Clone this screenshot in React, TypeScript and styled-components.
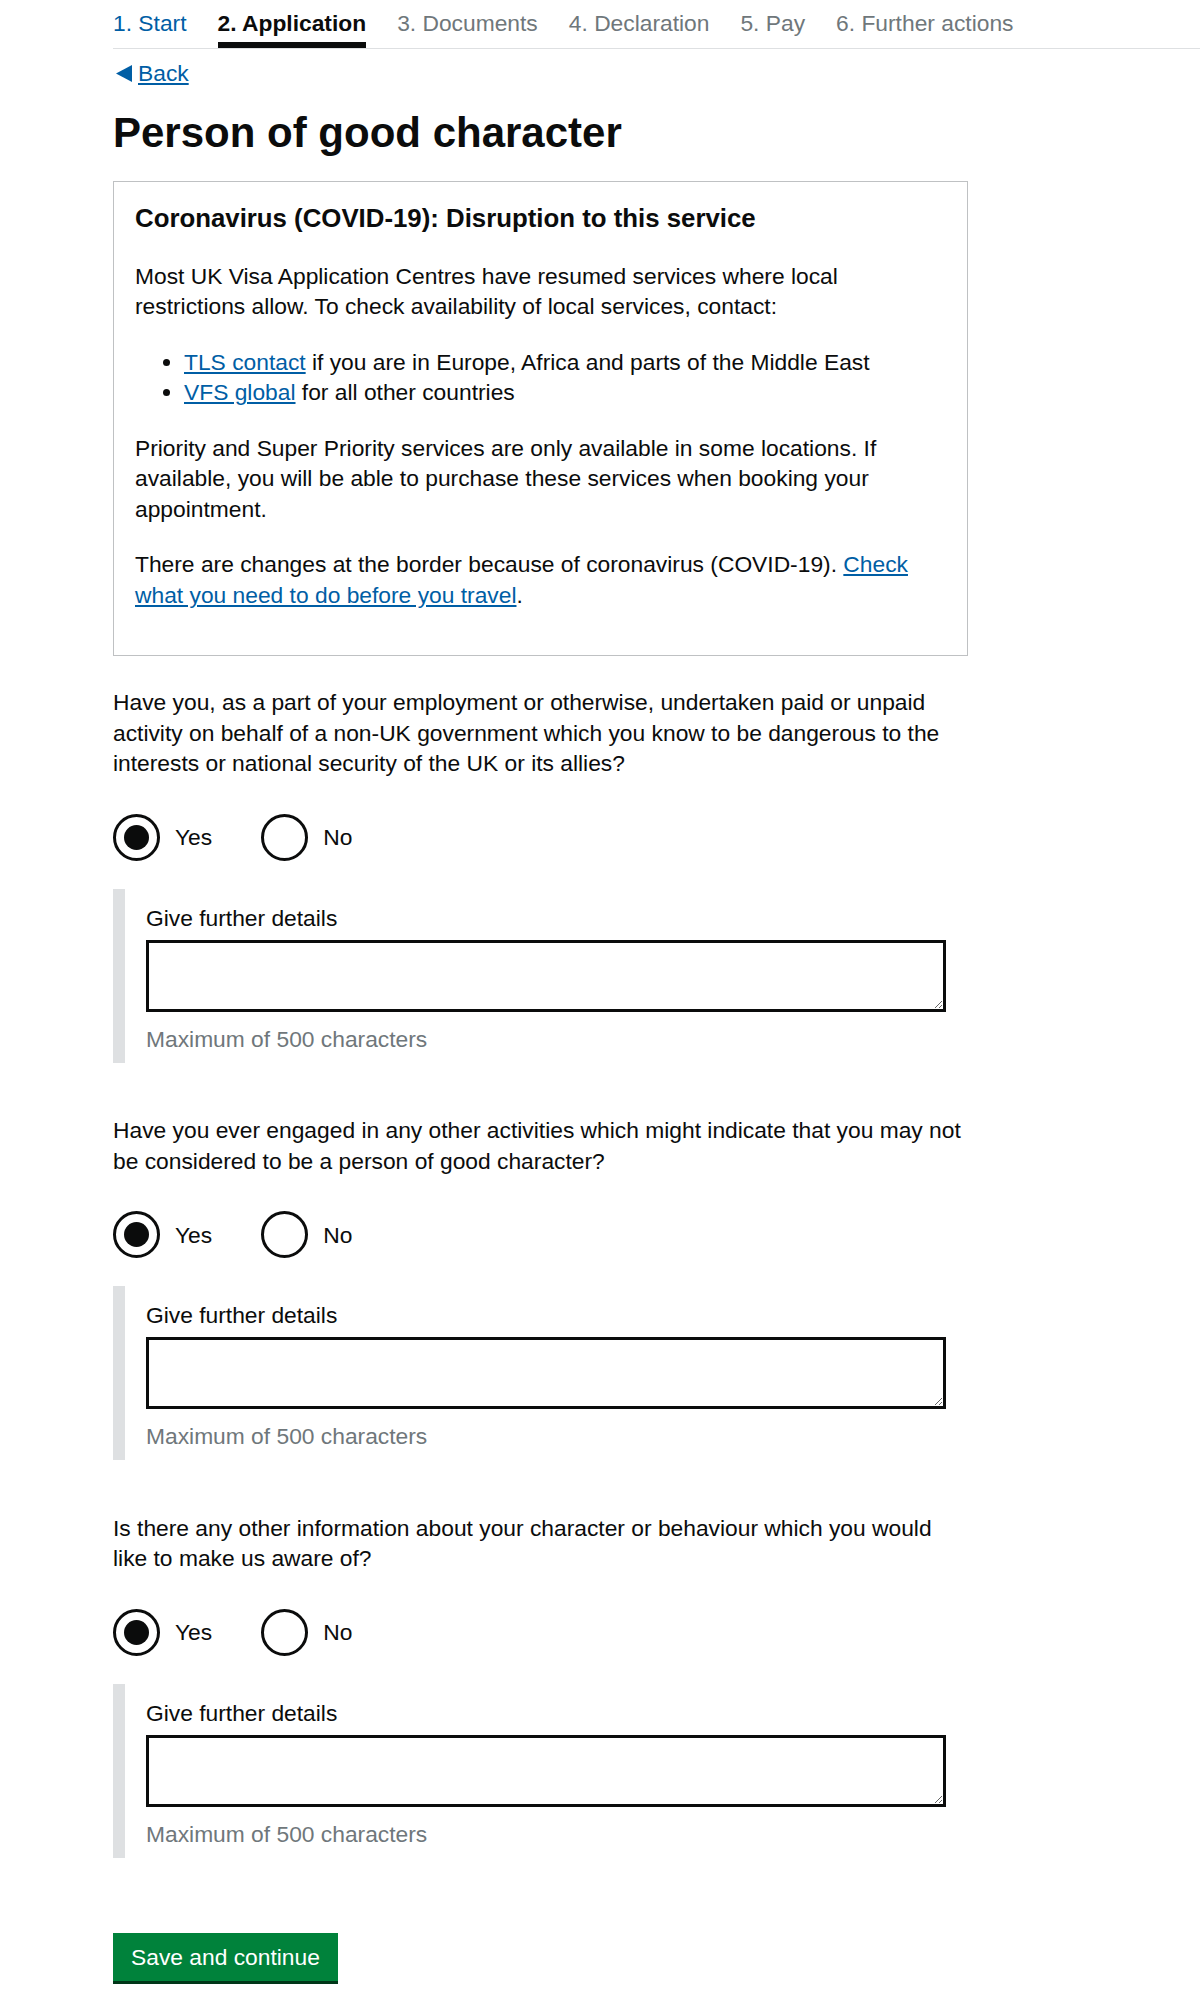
import React, { useState } from "react";
import styled, { createGlobalStyle } from "styled-components";

const Global = createGlobalStyle`
  html, body { margin: 0; padding: 0; background: #ffffff; }
  body {
    font-family: "Liberation Sans", Arial, Helvetica, sans-serif;
    color: #0b0c0c;
    font-size: 22.8px;
    line-height: 30.5px;
  }
  *, *::before, *::after { box-sizing: border-box; }
`;

const Page = styled.div`
  padding: 8px 0 40px 113px;
`;

const StepNav = styled.ul`
  display: flex;
  gap: 31px;
  list-style: none;
  margin: 0;
  padding: 0;
  border-bottom: 1px solid #dee0e2;
`;

type StepState = "done" | "active" | "todo";

const Step = styled.li<{ $state: StepState }>`
  padding: 0 0 3.5px;
  border-bottom: 6px solid ${(p) => (p.$state === "active" ? "#0b0c0c" : "transparent")};
  font-weight: ${(p) => (p.$state === "active" ? 700 : 400)};
  color: ${(p) =>
    p.$state === "active" ? "#0b0c0c" : p.$state === "done" ? "#005ea5" : "#6f777b"};
  white-space: nowrap;
`;

const BackRow = styled.div`
  margin-top: 9px;
`;

const BackLink = styled.a`
  display: inline-flex;
  align-items: center;
  gap: 6px;
  color: #005ea5;
  text-decoration: none;
  cursor: pointer;
`;

const BackArrow = styled.svg`
  margin-left: 3px;
  display: block;
`;

const BackText = styled.span`
  text-decoration: underline;
  text-underline-offset: 2px;
`;

const Title = styled.h1`
  margin: 21px 0 0;
  font-size: 42px;
  line-height: 46px;
  font-weight: 700;
`;

const Notice = styled.div`
  margin-top: 24.5px;
  width: 855px;
  border: 1px solid #bfc1c3;
  padding: 21.5px 20px 45px 21px;
`;

const NoticeTitle = styled.h2`
  margin: 0 0 26.5px;
  font-size: 25.8px;
  line-height: 31px;
  font-weight: 700;
`;

const Para = styled.p`
  margin: 0 0 25px;
  &:last-child { margin-bottom: 0; }
`;

const BulletList = styled.ul`
  margin: 0 0 25px;
  padding-left: 49px;
  list-style: disc;
`;

const Link = styled.a`
  color: #005ea5;
  text-decoration: underline;
  cursor: pointer;
`;

const Question = styled.div`
  margin-top: 31px;
  & + & { margin-top: 52.5px; }
`;

const QuestionText = styled.div`
  width: 855px;
`;

const RadioGroup = styled.div`
  display: flex;
  gap: 49px;
  margin-top: 35px;
`;

const RadioOption = styled.label`
  display: flex;
  align-items: center;
  gap: 15px;
  cursor: pointer;
`;

const HiddenInput = styled.input`
  display: none;
`;

const RadioCircle = styled.span<{ $checked: boolean }>`
  display: flex;
  align-items: center;
  justify-content: center;
  width: 47px;
  height: 47px;
  border: 3px solid #0b0c0c;
  border-radius: 50%;
  background: #ffffff;
  &::after {
    content: "";
    width: 25px;
    height: 25px;
    border-radius: 50%;
    background: ${(p) => (p.$checked ? "#0b0c0c" : "transparent")};
  }
`;

const Reveal = styled.div`
  margin-top: 28px;
  border-left: 12px solid #dee0e2;
  padding: 14px 0 8.5px 21px;
`;

const FieldLabel = styled.label`
  display: block;
  margin-bottom: 6.5px;
`;

const TextArea = styled.textarea`
  display: block;
  width: 800px;
  height: 72px;
  margin: 0;
  padding: 5px;
  border: 3px solid #0b0c0c;
  border-radius: 0;
  font-family: inherit;
  font-size: 22.8px;
  line-height: 30.5px;
  color: #0b0c0c;
  outline: none;
`;

const Hint = styled.div`
  margin-top: 12px;
  color: #6f777b;
`;

const SubmitButton = styled.button`
  display: block;
  margin-top: 75px;
  padding: 9px 18px;
  border: 0;
  border-radius: 0;
  background: #00823b;
  color: #ffffff;
  font-family: inherit;
  font-size: 22.8px;
  line-height: 30.5px;
  box-shadow: 0 3px 0 #003618;
  cursor: pointer;
`;

const steps: { label: string; state: StepState }[] = [
  { label: "1. Start", state: "done" },
  { label: "2. Application", state: "active" },
  { label: "3. Documents", state: "todo" },
  { label: "4. Declaration", state: "todo" },
  { label: "5. Pay", state: "todo" },
  { label: "6. Further actions", state: "todo" },
];

const questions = [
  "Have you, as a part of your employment or otherwise, undertaken paid or unpaid activity on behalf of a non-UK government which you know to be dangerous to the interests or national security of the UK or its allies?",
  "Have you ever engaged in any other activities which might indicate that you may not be considered to be a person of good character?",
  "Is there any other information about your character or behaviour which you would like to make us aware of?",
];

export default function App() {
  const [answers, setAnswers] = useState<string[]>(["yes", "yes", "yes"]);

  const setAnswer = (i: number, v: string) =>
    setAnswers((prev) => prev.map((a, j) => (j === i ? v : a)));

  return (
    <>
      <Global />
      <Page>
        <nav>
          <StepNav>
            {steps.map((s) => (
              <Step key={s.label} $state={s.state}>
                {s.label}
              </Step>
            ))}
          </StepNav>
        </nav>

        <BackRow>
          <BackLink>
            <BackArrow width="16" height="17" viewBox="0 0 16 17" aria-hidden="true">
              <polygon points="0,8.5 16,0 16,17" fill="#005ea5" />
            </BackArrow>
            <BackText>Back</BackText>
          </BackLink>
        </BackRow>

        <Title>Person of good character</Title>

        <Notice>
          <NoticeTitle>Coronavirus (COVID-19): Disruption to this service</NoticeTitle>
          <Para>
            Most UK Visa Application Centres have resumed services where local restrictions
            allow. To check availability of local services, contact:
          </Para>
          <BulletList>
            <li>
              <Link>TLS contact</Link> if you are in Europe, Africa and parts of the Middle East
            </li>
            <li>
              <Link>VFS global</Link> for all other countries
            </li>
          </BulletList>
          <Para>
            Priority and Super Priority services are only available in some locations. If
            available, you will be able to purchase these services when booking your
            appointment.
          </Para>
          <Para>
            There are changes at the border because of coronavirus (COVID-19).{" "}
            <Link>Check what you need to do before you travel</Link>.
          </Para>
        </Notice>

        {questions.map((q, i) => (
          <Question key={i} role="group">
            <QuestionText>{q}</QuestionText>
            <RadioGroup>
              {["yes", "no"].map((v) => (
                <RadioOption key={v}>
                  <HiddenInput
                    type="radio"
                    name={`q${i}`}
                    value={v}
                    checked={answers[i] === v}
                    onChange={() => setAnswer(i, v)}
                  />
                  <RadioCircle $checked={answers[i] === v} />
                  <span>{v === "yes" ? "Yes" : "No"}</span>
                </RadioOption>
              ))}
            </RadioGroup>
            {answers[i] === "yes" && (
              <Reveal>
                <FieldLabel htmlFor={`details-${i}`}>Give further details</FieldLabel>
                <TextArea id={`details-${i}`} maxLength={500} />
                <Hint>Maximum of 500 characters</Hint>
              </Reveal>
            )}
          </Question>
        ))}

        <SubmitButton type="button">Save and continue</SubmitButton>
      </Page>
    </>
  );
}
